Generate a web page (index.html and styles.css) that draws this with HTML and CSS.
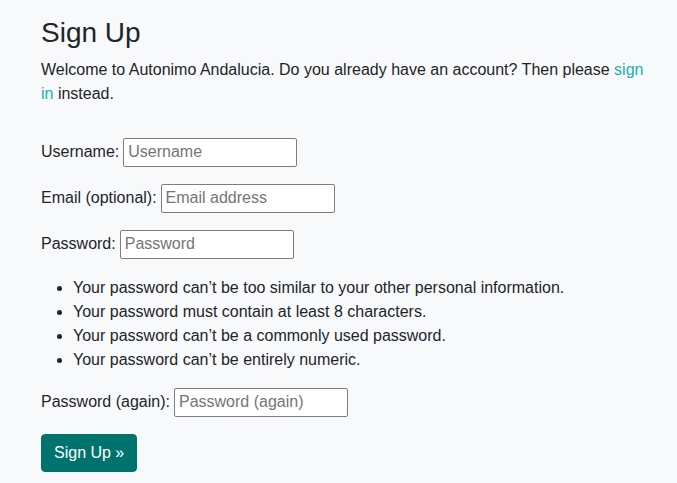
FILE: index.html
```html
<!DOCTYPE html>
<html lang="en">
<head>
<meta charset="utf-8">
<title>Sign Up</title>
<link rel="stylesheet" href="styles.css">
</head>
<body>
<main class="page">
  <h1 class="title">Sign Up</h1>
  <p class="intro">Welcome to Autonimo Andalucia. Do you already have an account? Then please <a class="link" href="#">sign in</a> instead.</p>
  <form class="signup">
    <div class="row"><label class="label" for="u">Username:</label><input class="field" id="u" type="text" placeholder="Username"></div>
    <div class="row"><label class="label" for="e">Email (optional):</label><input class="field" id="e" type="email" placeholder="Email address"></div>
    <div class="row"><label class="label" for="p1">Password:</label><input class="field" id="p1" type="password" placeholder="Password"></div>
    <ul class="help">
      <li>Your password can’t be too similar to your other personal information.</li>
      <li>Your password must contain at least 8 characters.</li>
      <li>Your password can’t be a commonly used password.</li>
      <li>Your password can’t be entirely numeric.</li>
    </ul>
    <div class="row"><label class="label" for="p2">Password (again):</label><input class="field" id="p2" type="password" placeholder="Password (again)"></div>
    <button class="btn" type="submit">Sign Up »</button>
  </form>
</main>
</body>
</html>
```
FILE: styles.css
```css
html, body {
  margin: 0;
  padding: 0;
  background: #f8f9fa;
}
body {
  font-family: "Liberation Sans", Arial, sans-serif;
  font-size: 16px;
  line-height: 24px;
  color: #212529;
}
.page {
  padding: 16px 32px 0 41px;
  max-width: 604px;
}
.title {
  margin: 0 0 8px;
  font-size: 28px;
  line-height: 1.2;
  font-weight: 400;
}
.intro {
  margin: 0 0 16px;
}
.link {
  color: #17b3ac;
  text-decoration: none;
}
.signup {
  padding-top: 16px;
}
.row {
  display: flex;
  align-items: center;
  height: 29px;
  margin-bottom: 17px;
}
.label {
  margin-right: 4px;
  white-space: nowrap;
}
.field {
  box-sizing: border-box;
  width: 174px;
  height: 29px;
  padding: 0 4px;
  border: 1px solid #7d7d7d;
  border-radius: 2px;
  background: #fff;
  font-family: "Liberation Sans", Arial, sans-serif;
  font-size: 16px;
  color: #212529;
}
.field::placeholder {
  color: #757575;
}
.help {
  margin: 0 0 16px;
  padding-left: 32px;
}
.btn {
  display: inline-block;
  padding: 6px 12px;
  border: 1px solid #00736e;
  border-radius: 4px;
  background: #00736e;
  color: #fff;
  font-family: "Liberation Sans", Arial, sans-serif;
  font-size: 16px;
  line-height: 24px;
}
```
